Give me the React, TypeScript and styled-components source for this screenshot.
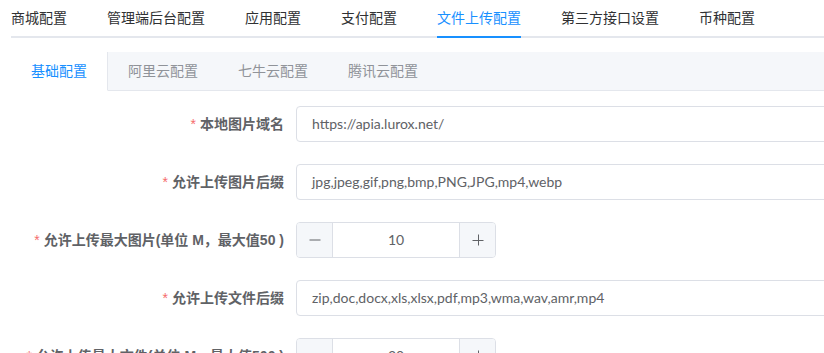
import React from "react";
import styled, { createGlobalStyle } from "styled-components";

const BLUE = "#1890ff";
const BORDER = "#dcdfe6";
const LINE = "#e4e7ed";
const FONT = `"Liberation Sans", "Noto Sans CJK SC", sans-serif`;
const INPUT_FONT = `Lato, "Liberation Sans", sans-serif`;

const GlobalStyle = createGlobalStyle`
  html, body {
    margin: 0;
    padding: 0;
    background: #fff;
    overflow: hidden;
  }
  body {
    font-family: ${FONT};
    font-size: 14px;
    color: #606266;
  }
`;

const TOP_TABS = ["商城配置", "管理端后台配置", "应用配置", "支付配置", "文件上传配置", "第三方接口设置", "币种配置"];
const SUB_TABS = ["基础配置", "阿里云配置", "七牛云配置", "腾讯云配置"];

type Field =
  | { label: string; kind: "text"; value: string }
  | { label: string; kind: "number"; value: number };

const FIELDS: Field[] = [
  { label: "本地图片域名", kind: "text", value: "https://apia.lurox.net/" },
  { label: "允许上传图片后缀", kind: "text", value: "jpg,jpeg,gif,png,bmp,PNG,JPG,mp4,webp" },
  { label: "允许上传最大图片(单位 M，最大值50 )", kind: "number", value: 10 },
  { label: "允许上传文件后缀", kind: "text", value: "zip,doc,docx,xls,xlsx,pdf,mp3,wma,wav,amr,mp4" },
  { label: "允许上传最大文件(单位 M，最大值500 )", kind: "number", value: 30 },
];

const App = () => {
  return (
    <Page>
      <GlobalStyle />
      <TopNav>
        {TOP_TABS.map((t) => (
          <TopTab key={t} $active={t === "文件上传配置"}>
            {t}
          </TopTab>
        ))}
      </TopNav>

      <SubNav>
        {SUB_TABS.map((t, i) => (
          <SubTab key={t} $active={i === 0}>
            {t}
          </SubTab>
        ))}
        <SubNavRest />
      </SubNav>

      <Form>
        {FIELDS.map((f) => (
          <FormRow key={f.label}>
            <Label>
              <Star>*</Star>
              {f.label}
            </Label>
            {f.kind === "text" ? (
              <TextInput>{f.value}</TextInput>
            ) : (
              <NumberInput>
                <StepButton $side="left">
                  <svg width="12" height="12" viewBox="0 0 12 12">
                    <path d="M0.5 6h11" stroke="#606266" strokeWidth="1" />
                  </svg>
                </StepButton>
                <NumberValue>{f.value}</NumberValue>
                <StepButton $side="right">
                  <svg width="12" height="12" viewBox="0 0 12 12">
                    <path d="M0.5 6.5h11M6.5 0.5v11" stroke="#606266" strokeWidth="1" />
                  </svg>
                </StepButton>
              </NumberInput>
            )}
          </FormRow>
        ))}
      </Form>
    </Page>
  );
};

const Page = styled.div`
  padding-left: 11px;
  width: 1000px;
`;

const TopNav = styled.div`
  display: flex;
  height: 36px;
  border-bottom: 2px solid ${LINE};
`;

const TopTab = styled.div<{ $active?: boolean }>`
  position: relative;
  padding: 0 20px;
  line-height: 36px;
  font-size: 14px;
  color: ${(p) => (p.$active ? BLUE : "#303133")};
  white-space: nowrap;

  &:first-child {
    padding-left: 0;
  }

  &::after {
    content: "";
    display: ${(p) => (p.$active ? "block" : "none")};
    position: absolute;
    left: 20px;
    right: 20px;
    bottom: -2px;
    height: 2px;
    background: ${BLUE};
  }
`;

const SubNav = styled.div`
  display: flex;
  margin-top: 14px;
  height: 39px;
`;

const SubTab = styled.div<{ $active?: boolean }>`
  padding: 0 20px;
  line-height: 38px;
  font-size: 14px;
  white-space: nowrap;
  color: ${(p) => (p.$active ? BLUE : "#909399")};
  background: ${(p) => (p.$active ? "#fff" : "#f5f7fa")};
  border-bottom: 1px solid ${(p) => (p.$active ? "transparent" : LINE)};
  border-right: ${(p) => (p.$active ? `1px solid ${LINE}` : "none")};
`;

const SubNavRest = styled.div`
  flex: 1;
  background: #f5f7fa;
  border-bottom: 1px solid ${LINE};
`;

const Form = styled.div`
  display: flex;
  flex-direction: column;
  gap: 22px;
  margin-top: 15px;
`;

const FormRow = styled.div`
  display: flex;
  align-items: center;
  height: 36px;
`;

const Label = styled.label`
  flex: 0 0 285px;
  box-sizing: border-box;
  padding-right: 12px;
  text-align: right;
  font-weight: 700;
  font-size: 14px;
  color: #606266;
  white-space: nowrap;
  line-height: 36px;
`;

const Star = styled.span`
  color: #f56c6c;
  margin-right: 4px;
  font-weight: 400;
`;

const TextInput = styled.div`
  box-sizing: border-box;
  width: 600px;
  height: 36px;
  padding: 0 15px;
  line-height: 34px;
  border: 1px solid ${BORDER};
  border-radius: 4px;
  color: #606266;
  font-family: ${INPUT_FONT};
  font-size: 14px;
  white-space: nowrap;
`;

const NumberInput = styled.div`
  box-sizing: border-box;
  display: flex;
  width: 200px;
  height: 36px;
  border: 1px solid ${BORDER};
  border-radius: 4px;
  overflow: hidden;
`;

const StepButton = styled.div<{ $side: "left" | "right" }>`
  flex: 0 0 35px;
  display: flex;
  align-items: center;
  justify-content: center;
  background: #f5f7fa;
  ${(p) => (p.$side === "left" ? `border-right: 1px solid ${BORDER};` : `border-left: 1px solid ${BORDER};`)}
`;

const NumberValue = styled.div`
  flex: 1;
  text-align: center;
  line-height: 34px;
  font-family: ${INPUT_FONT};
  font-size: 14px;
  color: #606266;
`;

export default App;
